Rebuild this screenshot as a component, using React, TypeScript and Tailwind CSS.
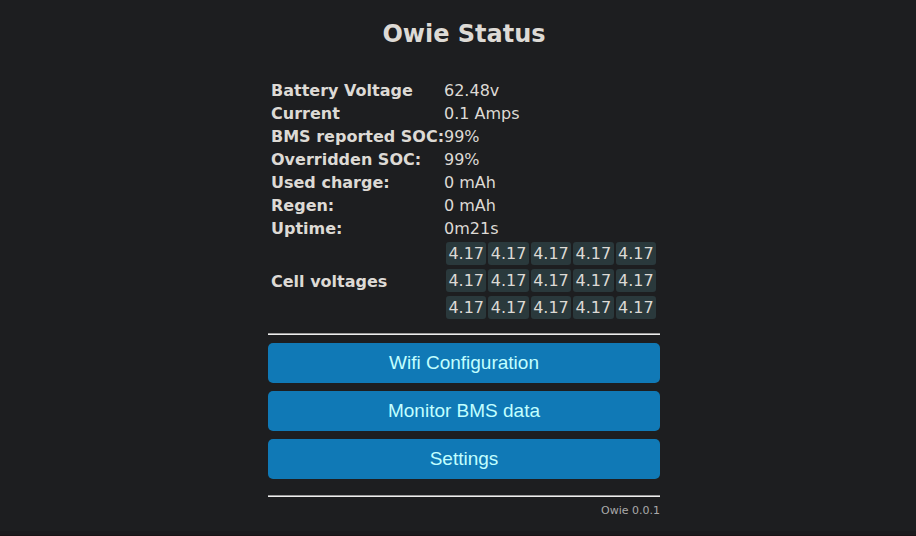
const readings: [string, string][] = [
  ["Battery Voltage", "62.48v"],
  ["Current", "0.1 Amps"],
  ["BMS reported SOC:", "99%"],
  ["Overridden SOC:", "99%"],
  ["Used charge:", "0 mAh"],
  ["Regen:", "0 mAh"],
  ["Uptime:", "0m21s"],
];

const cellRows: string[][] = [
  ["4.17", "4.17", "4.17", "4.17", "4.17"],
  ["4.17", "4.17", "4.17", "4.17", "4.17"],
  ["4.17", "4.17", "4.17", "4.17", "4.17"],
];

const actions = ["Wifi Configuration", "Monitor BMS data", "Settings"];

function Rule() {
  return <hr className="border-t border-b border-t-[#9a9a9a] border-b-[#eeeeee]" />;
}

export default function App() {
  return (
    <div className="flex min-h-screen flex-col bg-[#1d1e20] font-[Verdana,'DejaVu_Sans',sans-serif] text-base text-[#dddad5]">
      <main className="flex grow justify-center pl-3">
        <div className="w-full max-w-[392px]">
          <h1 className="pt-[19px] text-center text-2xl leading-[30px] font-bold">Owie Status</h1>
          <table className="mt-[30px] w-full table-fixed border-collapse text-left">
            <colgroup>
              <col className="w-[176px]" />
              <col />
            </colgroup>
            <tbody>
              {readings.map(([label, value]) => (
                <tr key={label}>
                  <th scope="row" className="py-0 pl-[3px] leading-[23px] font-bold whitespace-nowrap">
                    {label}
                  </th>
                  <td className="p-0 leading-[23px]">{value}</td>
                </tr>
              ))}
              <tr>
                <th scope="row" className="pt-1 pb-0 pl-[3px] font-bold">
                  Cell voltages
                </th>
                <td className="p-0 pt-0.5">
                  <div className="grid grid-cols-5 gap-x-0.5 gap-y-1 pr-1 pl-0.5">
                    {cellRows.flat().map((voltage, index) => (
                      <span key={index} className="rounded-[3px] bg-[#2a393c] pt-px text-center leading-[22px]">
                        {voltage}
                      </span>
                    ))}
                  </div>
                </td>
              </tr>
            </tbody>
          </table>
          <div className="pt-3.5">
            <Rule />
          </div>
          <div className="flex flex-col gap-2 pt-2 pb-4 font-['Liberation_Sans',Arial,sans-serif]">
            {actions.map((action) => (
              <button
                key={action}
                type="button"
                className="w-full rounded-[5px] bg-[#1079b6] text-[19px] leading-10 text-[#c2ffff]"
              >
                {action}
              </button>
            ))}
          </div>
          <Rule />
          <p className="pt-1.5 text-right text-[11px] leading-4 text-[#aaaaaa]">Owie 0.0.1</p>
        </div>
      </main>
      <div className="h-[5px] border-b border-[#1a1315] bg-[#1b1a1d]" />
    </div>
  );
}
